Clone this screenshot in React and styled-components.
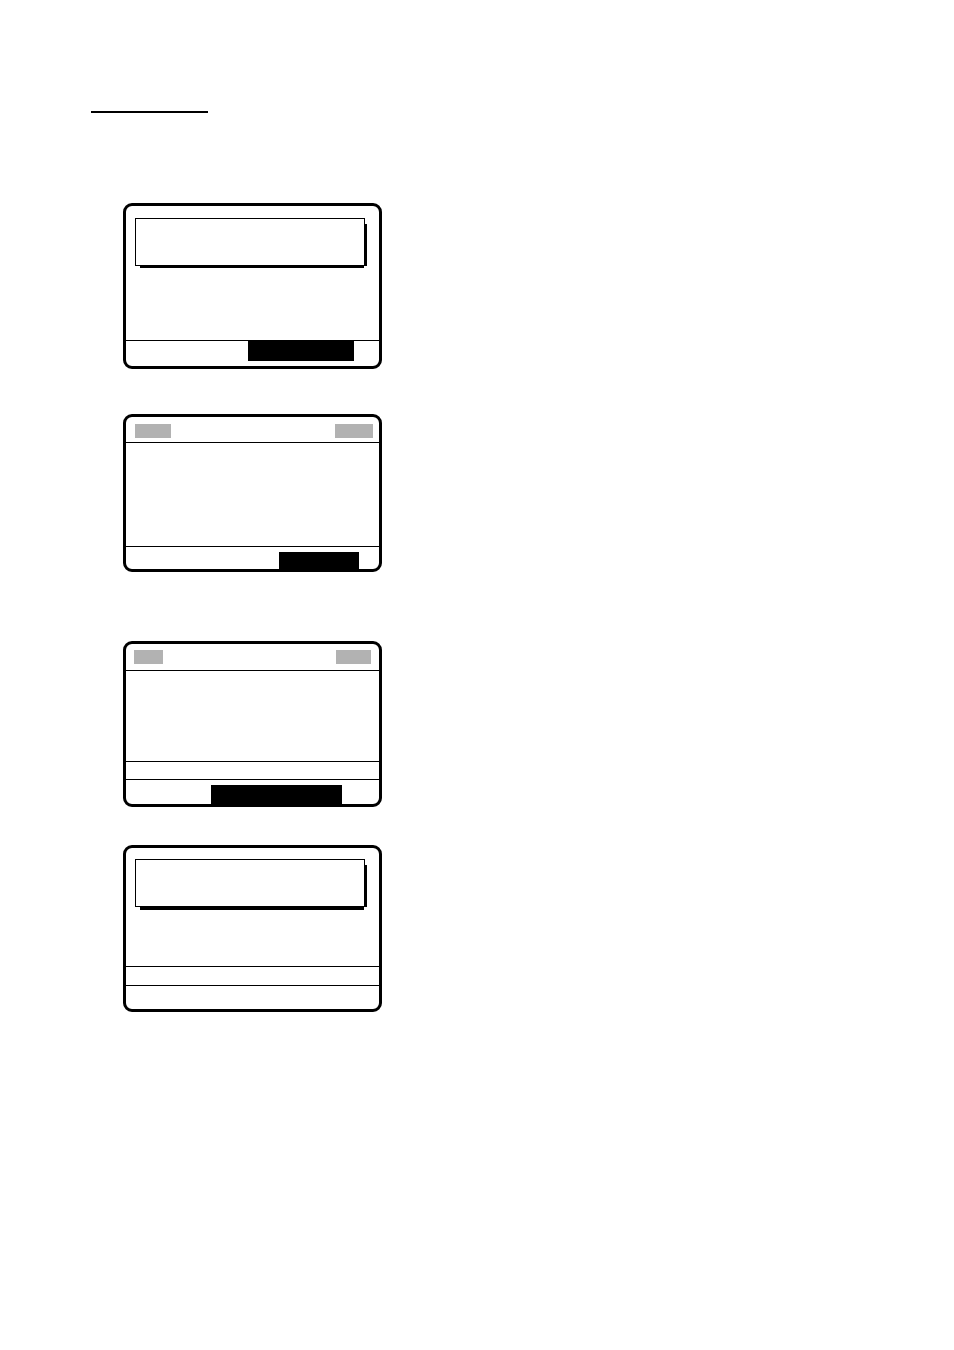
import React from 'react';
import styled, { createGlobalStyle } from 'styled-components';

const GlobalStyle = createGlobalStyle`
	* {
		box-sizing: border-box;
	}

	body {
		margin: 0;
		background: #fff;
		font-family: "Liberation Sans", Arial, sans-serif;
	}
`;

const Page = styled.main`
	min-height: 100vh;
	padding: 111px 91px 80px;
`;

const TitleRule = styled.hr`
	width: 117px;
	height: 2px;
	margin: 0 0 90px;
	border: none;
	background: #000;
`;

const ScreenList = styled.div`
	display: flex;
	flex-direction: column;
	padding-left: 32px;
`;

const Screen = styled.section`
	display: flex;
	flex-direction: column;
	width: 100%;
	max-width: 259px;
	margin-bottom: ${props => props.$gap || 0}px;
	border: 3px solid #000;
	border-radius: 9px;
`;

const ScreenHeader = styled.header`
	display: flex;
	justify-content: space-between;
	padding: ${props => props.$padding};
	border-bottom: 1px solid #000;
`;

const Tag = styled.span`
	width: ${props => props.$width}px;
	height: 14px;
	background: #b2b2b2;
`;

const ScreenBody = styled.div`
	display: flow-root;
	min-height: ${props => props.$height}px;
`;

const Notice = styled.div`
	height: 48px;
	margin: ${props => props.$top}px 14px 0 9px;
	border: 1px solid #000;
	background: #fff;
	box-shadow:
		5px 3px 0 -3px #000,
		2px ${props => props.$drop}px 0 -3px #000;
`;

const StatusRow = styled.div`
	height: ${props => props.$height}px;
	border-top: 1px solid #000;
`;

const ScreenFooter = styled.footer`
	display: flex;
	justify-content: flex-end;
	align-items: ${props => props.$align || 'flex-end'};
	height: ${props => props.$height}px;
	padding-right: ${props => props.$right || 0}px;
	border-top: 1px solid #000;
`;

const SoftKey = styled.div`
	width: ${props => props.$width}px;
	height: ${props => props.$height}px;
	background: #000;
`;

const App = () => (
	<>
		<GlobalStyle />
		<Page>
			<TitleRule />
			<ScreenList>
				<Screen $gap={45}>
					<ScreenBody $height={134}>
						<Notice $top={12} $drop={5} />
					</ScreenBody>
					<ScreenFooter $height={26} $right={25} $align="flex-start">
						<SoftKey $width={106} $height={20} />
					</ScreenFooter>
				</Screen>

				<Screen $gap={69}>
					<ScreenHeader $padding="7px 6px 4px 9px">
						<Tag $width={36} />
						<Tag $width={38} />
					</ScreenHeader>
					<ScreenBody $height={103} />
					<ScreenFooter $height={23} $right={20}>
						<SoftKey $width={80} $height={17} />
					</ScreenFooter>
				</Screen>

				<Screen $gap={38}>
					<ScreenHeader $padding="6px 8px">
						<Tag $width={29} />
						<Tag $width={35} />
					</ScreenHeader>
					<ScreenBody $height={90} />
					<StatusRow $height={18} />
					<ScreenFooter $height={25} $right={37}>
						<SoftKey $width={131} $height={19} />
					</ScreenFooter>
				</Screen>

				<Screen>
					<ScreenBody $height={118}>
						<Notice $top={11} $drop={6} />
					</ScreenBody>
					<StatusRow $height={19} />
					<ScreenFooter $height={24} />
				</Screen>
			</ScreenList>
		</Page>
	</>
);

export default App;
